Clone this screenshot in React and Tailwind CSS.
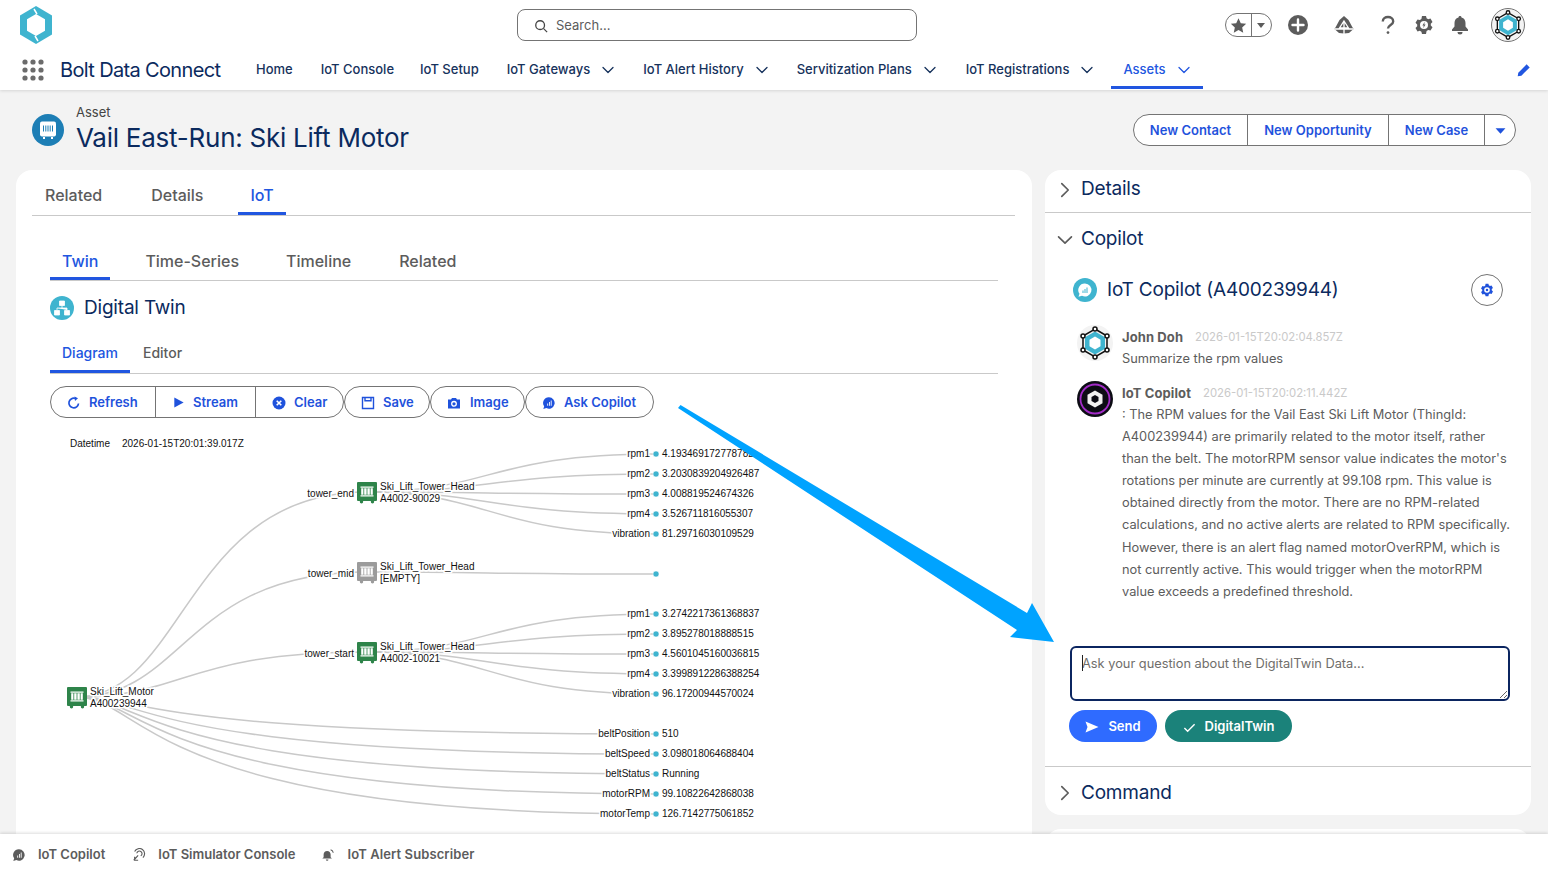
const Chevron = ({ className = "", dir = "down" }) => (
  <svg viewBox="0 0 14 14" className={className} fill="none" stroke="currentColor" strokeWidth="1.3" strokeLinecap="round" strokeLinejoin="round">
    {dir === "down" ? <path d="M2 4.500 7 9.500 12 4.500" /> : <path d="M4.500 2 9.500 7 4.500 12" />}
  </svg>
);

const Gear = ({ className = "", bolt = false, hole = "#fff" }) => (
  <svg viewBox="0 0 20 20" className={className} fill="currentColor">
    <path d="M8 1h4l.6 2.300 1.600.9 2.300-.6 2 3.400-1.700 1.700v1.800l1.700 1.700-2 3.400-2.300-.6-1.600.9L12 19H8l-.6-2.300-1.600-.9-2.300.6-2-3.400 1.700-1.700V9.500L1.500 7.800l2-3.400 2.300.6 1.600-.9z" />
    <circle cx="10" cy="10" r="4" fill={hole} />
    {bolt ? <path d="M10.800 6.800 8.400 10.400h1.400l-.6 2.800 2.400-3.600h-1.400z" fill="currentColor" /> : <circle cx="10" cy="10" r="1.800" fill="currentColor" />}
  </svg>
);

const Molecule = ({ className = "" }) => (
  <svg viewBox="0 0 36 36" className={className}>
    <path d="M18 4 30 11V25L18 32 6 25V11Z" stroke="#111" strokeWidth="1.500" fill="none" />
    <path d="M18 6.500 28 12.300V23.700L18 29.500 8 23.700V12.300Z" fill="#3fb4cf" />
    <path d="M18 11.500 23.500 14.800V21.200L18 24.500 12.500 21.200V14.800Z" fill="#fff" />
    <g fill="#fff" stroke="#111" strokeWidth="1.500">
      <circle cx="18" cy="4" r="2" />
      <circle cx="30" cy="11" r="2" />
      <circle cx="30" cy="25" r="2" />
      <circle cx="18" cy="32" r="2" />
      <circle cx="6" cy="25" r="2" />
      <circle cx="6" cy="11" r="2" />
    </g>
  </svg>
);

const AssetGlyph = () => (
  <g>
    <path d="M-6.500-5.500H6.500V-4.300H-6.500ZM-6.500 3.300H6.500V4.500H-6.500Z" fill="#fff" />
    <path d="M-5.800-3.800h2.200V2.800h-2.200ZM-2.800-3.800h2.400V2.800h-2.400ZM.4-3.800h2.400V2.800H.4ZM3.600-3.800h2.200V2.800H3.600Z" fill="#fff" />
  </g>
);

const ChatBars = ({ className = "" }) => (
  <svg viewBox="0 0 16 16" className={className} fill="currentColor">
    <path d="M8 1.500a6.500 6.500 0 1 1-3 12.300L1.500 14.800l1-3A6.500 6.500 0 0 1 8 1.500z" />
    <path d="M6 8.500h1V11H6zM8 6.800h1V11H8zM10 5h1v6h-1z" fill="#fff" />
  </svg>
);

const NavItem = ({ children, caret, active, className = "" }) => (
  <div className={`flex h-full items-center border-b-[3px] pt-1 text-[13px] font-medium ${active ? "border-[#2156e0] px-3 text-[#2156e0]" : "border-transparent text-[#16325c]"} ${className}`}>
    <span>{children}</span>
    {caret && <Chevron className="ml-[11px] h-[14px] w-[14px]" />}
  </div>
);

const OutlineBtn = ({ icon, children, className = "" }) => (
  <button className={`flex h-full items-center pt-px text-[13px] font-semibold text-[#1f52dc] ${className}`}>
    {icon}
    {children}
  </button>
);

const Tab = ({ children, active, size = "text-base", className = "" }) => (
  <div className={`-mb-px flex h-full items-center border-b-[3px] px-3 font-medium ${size} ${active ? "border-[#2156e0] text-[#2156e0]" : "border-transparent text-[#5c5c5c]"} ${className}`}>
    {children}
  </div>
);

const leaves = [
  [454, "rpm1", "4.193469172778782", 367, 492],
  [474, "rpm2", "3.2030839204926487", 367, 492],
  [494, "rpm3", "4.008819524674326", 367, 492],
  [514, "rpm4", "3.526711816055307", 367, 492],
  [534, "vibration", "81.29716030109529", 367, 492],
  [574, "", "", 367, 572],
  [614, "rpm1", "3.2742217361368837", 367, 652],
  [634, "rpm2", "3.895278018888515", 367, 652],
  [654, "rpm3", "4.5601045160036815", 367, 652],
  [674, "rpm4", "3.3998912286388254", 367, 652],
  [694, "vibration", "96.17200944570024", 367, 652],
  [734, "beltPosition", "510", 76, 697],
  [754, "beltSpeed", "3.098018064688404", 76, 697],
  [774, "beltStatus", "Running", 76, 697],
  [794, "motorRPM", "99.10822642868038", 76, 697],
  [814, "motorTemp", "126.7142775061852", 76, 697],
];

const towers = [
  [492, "tower_end", "A4002-90029", "#2e844a"],
  [572, "tower_mid", "[EMPTY]", "#9b9b9b"],
  [652, "tower_start", "A4002-10021", "#2e844a"],
];

const link = (x1, y1, c, x2, y2) => `M${x1} ${y1}C${c} ${y1} ${c} ${y2} ${x2} ${y2}`;

const T = ({ x, y, anchor = "start", children }) => (
  <text x={x} y={y + 3} textAnchor={anchor} fontSize="10" fill="#111" stroke="#fff" strokeWidth="3" paintOrder="stroke" fontFamily="'Liberation Sans',sans-serif">
    {children}
  </text>
);

const NodeIcon = ({ x, y, fill }) => (
  <g transform={`translate(${x} ${y})`}>
    <rect x="-10" y="-10" width="20" height="19" rx="1" fill={fill} />
    <circle cx="-5.500" cy="9.800" r="1.700" fill={fill} />
    <circle cx="5.500" cy="9.800" r="1.700" fill={fill} />
    <AssetGlyph />
  </g>
);

const Diagram = () => (
  <svg viewBox="50 430 948 404" className="mt-3 block h-[404px] w-[948px]">
    <T x={70} y={443.500}>Datetime</T>
    <T x={122} y={443.500}>2026-01-15T20:01:39.017Z</T>
    <g fill="none" stroke="#c9c9c9" strokeWidth="1.500">
      {towers.map(([y]) => <path key={y} d={link(76, 697, 185, 367, y)} />)}
      {leaves.map(([y, , , sx, sy]) => <path key={y} d={sx === 76 ? link(sx, sy, 145, 656, y) : link(sx, sy, 490, 656, y)} />)}
    </g>
    {leaves.map(([y, name, val]) => (
      <g key={y}>
        <circle cx="656" cy={y} r="3" fill="#3fb4cf" stroke="#fff" strokeWidth=".5" />
        {name && <T x={650} y={y} anchor="end">{name}</T>}
        {val && <T x={662} y={y}>{val}</T>}
      </g>
    ))}
    {towers.map(([y, name, sub, fill]) => (
      <g key={y}>
        <NodeIcon x={367} y={y} fill={fill} />
        <T x={354} y={y + 1.500} anchor="end">{name}</T>
        <T x={380} y={y - 5.500}>Ski_Lift_Tower_Head</T>
        <T x={380} y={y + 6.500}>{sub}</T>
      </g>
    ))}
    <NodeIcon x={77} y={697} fill="#2e844a" />
    <T x={90} y={691.500}>Ski_Lift_Motor</T>
    <T x={90} y={703.500}>A400239944</T>
  </svg>
);

const paragraph = [
  ": The RPM values for the Vail East Ski Lift Motor (ThingId:",
  "A400239944) are primarily related to the motor itself, rather",
  "than the belt. The motorRPM sensor value indicates the motor's",
  "rotations per minute are currently at 99.108 rpm. This value is",
  "obtained directly from the motor. There are no RPM-related",
  "calculations, and no active alerts are related to RPM specifically.",
  "However, there is an alert flag named motorOverRPM, which is",
  "not currently active. This would trigger when the motorRPM",
  "value exceeds a predefined threshold.",
];

const heading = "text-[19px] tracking-[-0.2px] text-[#0b2a5e]";

export default function App() {
  return (
    <div className="relative h-[874px] w-full overflow-hidden bg-[#f3f3f3] [font-family:Inter,sans-serif]">
      {/* Global header */}
      <header className="relative z-10 h-[90px] bg-white shadow-[0_1px_3px_rgba(0,0,0,0.12)]">
        <div className="flex h-[50px] items-center pl-5">
          <svg viewBox="0 0 32 38" className="h-[38px] w-8">
            <path d="M16 0 32 9.500V28.500L16 38 0 28.500V9.500Z" fill="#3fb4cf" />
            <path d="M16 8 25 13.200V24.800L16 30 7 24.800V13.200Z" fill="#fff" />
            <path d="M17 8 14 3M15 30 18 35" stroke="#fff" strokeWidth="1.500" />
          </svg>
          <div className="ml-[465px] flex h-8 w-[400px] items-center rounded-lg border border-[#747474] bg-white pl-4 pt-px text-[13px] text-[#5c5c5c]">
            <svg viewBox="0 0 16 16" className="mr-2 h-[14px] w-[14px]" fill="none" stroke="#444" strokeWidth="1.500">
              <circle cx="7" cy="7" r="5" />
              <path d="M11 11 15 15" />
            </svg>
            Search...
          </div>
          <div className="ml-auto mr-[23px] flex items-center text-[#5c5c5c]">
            <div className="flex h-6 w-[47px] items-center rounded-full border border-[#747474]">
              <div className="flex h-full w-[26px] items-center justify-center border-r border-[#747474]">
                <svg viewBox="0 0 20 20" className="h-[17px] w-[17px]" fill="currentColor"><path d="M10 1.500 12.700 7.300 19 8 14.300 12.300 15.600 18.500 10 15.400 4.400 18.500 5.700 12.300 1 8 7.300 7.300Z" /></svg>
              </div>
              <svg viewBox="0 0 10 10" className="ml-[4px] h-[10px] w-[10px]" fill="currentColor"><path d="M1 3h8L5 8z" /></svg>
            </div>
            <svg viewBox="0 0 20 20" className="ml-[16px] h-5 w-5"><circle cx="10" cy="10" r="10" fill="currentColor" /><path d="M10 4.500v11M4.500 10h11" stroke="#fff" strokeWidth="2.400" strokeLinecap="round" /></svg>
            <svg viewBox="0 0 20 20" className="ml-[26px] h-5 w-5" fill="currentColor">
              <path d="M10 1 14.500 5 18 11.500 19.500 14 15 18 10 18.500 5 18 .5 14 2 11.500 5.500 5Z" />
              <path d="M10 6 14.500 13H5.500Z M1 14H19M10 6V19" stroke="#fff" strokeWidth="1.300" fill="none" />
            </svg>
            <svg viewBox="0 0 20 24" className="ml-[26px] h-6 w-[16px]" fill="none" stroke="currentColor" strokeWidth="3">
              <path d="M3.500 7.500C3.500 4 6.500 2 10 2s6.500 2 6.500 5.500c0 4.500-6.500 4.500-6.500 9" />
              <circle cx="10" cy="21.500" r="1.700" fill="currentColor" stroke="none" />
            </svg>
            <Gear bolt className="ml-[18px] h-5 w-5" />
            <svg viewBox="0 0 20 20" className="ml-[16px] h-5 w-5" fill="currentColor">
              <path d="M10 1c.9 0 1.500.6 1.500 1.400C14.300 3 15.500 5.300 15.500 8v3.500l2.500 3V16H2v-1.500l2.500-3V8c0-2.700 1.200-5 4-5.600C8.500 1.600 9.100 1 10 1z" />
              <path d="M7.500 17h5a2.500 2.500 0 0 1-5 0z" />
            </svg>
            <div className="ml-[21px] flex h-[34px] w-[34px] items-center justify-center rounded-full border border-[#747474] bg-[#f3f3f3]">
              <Molecule className="h-8 w-8" />
            </div>
          </div>
        </div>
        <div className="flex h-10 items-stretch pl-[22px]">
          <svg viewBox="0 0 22 22" className="h-[22px] w-[22px] self-center" fill="#6b6b6b">
            {[3, 11, 19].map((cy) => [3, 11, 19].map((cx) => <circle key={`${cx}${cy}`} cx={cx} cy={cy} r="2.600" />))}
          </svg>
          <div className="ml-4 flex w-[196px] items-center text-xl tracking-[-0.65px] text-[#0b2a5e]">Bolt Data Connect</div>
          <nav className="flex h-[39px] items-stretch gap-7">
            <NavItem>Home</NavItem>
            <NavItem>IoT Console</NavItem>
            <NavItem className="-ml-[2px]">IoT Setup</NavItem>
            <NavItem caret>IoT Gateways</NavItem>
            <NavItem caret>IoT Alert History</NavItem>
            <NavItem caret>Servitization Plans</NavItem>
            <NavItem caret className="ml-px">IoT Registrations</NavItem>
            <NavItem caret active className="-ml-[11px]">Assets</NavItem>
          </nav>
          <svg viewBox="0 0 16 16" className="ml-auto mr-[17px] h-[14px] w-[14px] self-center" fill="#2156e0">
            <path d="M11 1.500 14.500 5 5 14.500 .8 15.200 1.500 11z" />
          </svg>
        </div>
      </header>

      {/* Page header */}
      <div className="flex h-[80px] items-start pl-8 pr-8">
        <svg viewBox="-16 -16 32 32" className="mt-6 h-8 w-8">
          <circle r="16" fill="#1d7eb5" />
          <rect x="-8" y="-8.500" width="16" height="15" rx="2" fill="#fff" />
          <path d="M-5 8h2M3 8h2" stroke="#fff" strokeWidth="2" />
          <path d="M-4.500-4.500v6M-2.200-4.500v6M0-4.500v6M2.200-4.500v6M4.500-4.500v6" stroke="#1d7eb5" strokeWidth="1" />
        </svg>
        <div className="ml-3 mt-[14px]">
          <div className="text-[13px] leading-[16px] text-[#444]">Asset</div>
          <div className="mt-[2px] text-[26px] leading-[32px] tracking-[-0.25px] text-[#0b2a5e]">Vail East-Run: Ski Lift Motor</div>
        </div>
        <div className="ml-auto mt-6 flex h-8 w-[383px] items-stretch overflow-hidden rounded-full border border-[#747474] bg-white">
          <OutlineBtn className="w-[113px] justify-center">New Contact</OutlineBtn>
          <OutlineBtn className="w-[141px] justify-center border-l border-[#747474]">New Opportunity</OutlineBtn>
          <OutlineBtn className="w-[96px] justify-center border-l border-[#747474]">New Case</OutlineBtn>
          <div className="flex flex-1 items-center justify-center border-l border-[#747474]">
            <svg viewBox="0 0 10 10" className="h-[11px] w-[11px]" fill="#1f52dc"><path d="M.5 3h9L5 8z" /></svg>
          </div>
        </div>
      </div>

      {/* Main columns */}
      <main className="flex gap-[13px] pl-4">
        <section className="h-[704px] w-[1016px] rounded-t-2xl bg-white pl-4 pr-[17px]">
          <div className="flex h-[46px] items-stretch gap-6 border-b border-[#c9c9c9] pl-px">
            <Tab className="mr-px pt-2">Related</Tab>
            <Tab className="-mr-px pt-2">Details</Tab>
            <Tab active className="pt-2">IoT</Tab>
          </div>
          <div className="ml-[18px] w-[948px]">
            <div className="mt-[25px] flex h-10 items-stretch gap-[23px] border-b border-[#c9c9c9]">
              <Tab active className="pt-1">Twin</Tab>
              <Tab className="pt-1">Time-Series</Tab>
              <Tab className="pt-1">Timeline</Tab>
              <Tab className="ml-px pt-1">Related</Tab>
            </div>
            <div className="mt-[15px] flex h-6 items-center">
              <svg viewBox="0 0 24 24" className="h-6 w-6">
                <circle cx="12" cy="12" r="12" fill="#3fb4cf" />
                <path d="M9.500 5h5v4.500h-5zM12 9.500V12M7 12h10v2M7 12v2M4.500 14.500h5V19h-5zM14.500 14.500h5V19h-5z" fill="#fff" stroke="#fff" strokeWidth=".8" />
              </svg>
              <span className={`ml-[10px] ${heading}`}>Digital Twin</span>
            </div>
            <div className="mt-[14px] flex h-10 items-stretch border-b border-[#c9c9c9]">
              <Tab active size="text-sm" className="mr-px pt-[2px]">Diagram</Tab>
              <Tab size="text-sm" className="pt-[2px]">Editor</Tab>
            </div>
            <div className="mt-3 flex h-8">
              <div className="flex w-[294px] items-stretch rounded-full border border-[#747474]">
                <OutlineBtn className="w-[104px] gap-2 pl-4" icon={
                  <svg viewBox="0 0 14 14" className="h-[14px] w-[14px]" fill="none" stroke="#1f52dc" strokeWidth="1.700"><path d="M11.500 7.500A4.800 4.800 0 1 1 8 2.400" /><path d="M7.500 .5 11 2.200 8 5z" fill="#1f52dc" stroke="none" /></svg>
                }>Refresh</OutlineBtn>
                <OutlineBtn className="w-[100px] gap-2 border-l border-[#747474] pl-4" icon={
                  <svg viewBox="0 0 14 14" className="h-[13px] w-[13px]" fill="#1f52dc"><path d="M2.500 1.500 12.500 7 2.500 12.500z" /></svg>
                }>Stream</OutlineBtn>
                <OutlineBtn className="flex-1 gap-2 border-l border-[#747474] pl-4" icon={
                  <svg viewBox="0 0 14 14" className="h-[14px] w-[14px]"><circle cx="7" cy="7" r="6.500" fill="#1f52dc" /><path d="M4.700 4.700 9.300 9.300M9.300 4.700 4.700 9.300" stroke="#fff" strokeWidth="1.600" /></svg>
                }>Clear</OutlineBtn>
              </div>
              <div className="flex w-[86px] items-stretch rounded-full border border-[#747474]">
                <OutlineBtn className="w-full gap-2 pl-4" icon={
                  <svg viewBox="0 0 14 14" className="h-[14px] w-[14px]" fill="none" stroke="#1f52dc" strokeWidth="1.400"><path d="M1.500 1.500h11v11h-11zM4 1.500v3.200h6V1.500" /></svg>
                }>Save</OutlineBtn>
              </div>
              <div className="flex w-[95px] items-stretch rounded-full border border-[#747474]">
                <OutlineBtn className="w-full gap-[9px] pl-4" icon={
                  <svg viewBox="0 0 14 14" className="h-[14px] w-[14px]"><path d="M1 3.500h3L5 2h4l1 1.500h3V12.500H1z" fill="#1f52dc" /><circle cx="7" cy="7.800" r="2.300" fill="none" stroke="#fff" strokeWidth="1.300" /></svg>
                }>Image</OutlineBtn>
              </div>
              <div className="flex w-[129px] items-stretch rounded-full border border-[#747474]">
                <OutlineBtn className="w-full gap-2 pl-4" icon={<ChatBars className="h-[14px] w-[14px]" />}>Ask Copilot</OutlineBtn>
              </div>
            </div>
            <Diagram />
          </div>
        </section>

        <aside className="w-[486px]">
          <div className="h-[645px] rounded-2xl bg-white">
            <div className={`flex h-[43px] items-center border-b border-[#c9c9c9] pb-[3px] pl-[11px] ${heading}`}>
              <Chevron dir="right" className="mr-[7px] h-[18px] w-[18px] text-[#5c5c5c]" />
              Details
            </div>
            <div className={`flex h-[51px] items-center pl-[11px] pt-[2px] ${heading}`}>
              <Chevron className="mr-[7px] h-[18px] w-[18px] text-[#5c5c5c]" />
              Copilot
            </div>
            <div className="mt-[10px] flex h-8 items-center pl-7 pr-7">
              <svg viewBox="0 0 24 24" className="h-6 w-6">
                <circle cx="12" cy="12" r="12" fill="#3fb4cf" />
                <path d="M12 5.500a6.500 6.500 0 1 1-3 12.300l-3.500 1 1-3A6.500 6.500 0 0 1 12 5.500z" fill="#fff" />
                <path d="M9.500 12.500h1V15h-1zM11.500 11h1v4h-1zM13.500 9.500h1V15h-1z" fill="#3fb4cf" />
              </svg>
              <span className={`ml-[10px] ${heading}`}>IoT Copilot (A400239944)</span>
              <div className="ml-auto flex h-8 w-8 items-center justify-center rounded-full border border-[#747474]">
                <Gear className="h-[14px] w-[14px] text-[#1f52dc]" />
              </div>
            </div>
            <div className="ml-8 mt-[19px] flex">
              <div className="flex h-9 w-9 items-center justify-center rounded-full bg-[#f3f3f3]">
                <Molecule className="h-9 w-9" />
              </div>
              <div className="ml-[9px]">
                <div className="flex h-[23px] items-center pt-[2px]">
                  <span className="text-[13px] font-bold tracking-[0.1px] text-[#5c5c5c]">John Doh</span>
                  <span className="ml-3 text-[11.3px] text-[#c9c9c9]">2026-01-15T20:02:04.857Z</span>
                </div>
                <div className="text-[12.8px] leading-[22px] text-[#5c5c5c]">Summarize the rpm values</div>
              </div>
            </div>
            <div className="ml-8 mt-[11px] flex">
              <svg viewBox="0 0 36 36" className="h-9 w-9 shrink-0">
                <circle cx="18" cy="18" r="18" fill="#0c0c14" />
                <circle cx="18" cy="18" r="14.500" fill="none" stroke="#a22bc7" strokeWidth="1.800" />
                <path d="M18 9.500 25.500 13.800V22.200L18 26.500 10.500 22.200V13.800Z" fill="#f2f2f2" />
                <path d="M18 14 21.500 16V20L18 22 14.500 20V16Z" fill="#0c0c14" />
              </svg>
              <div className="ml-[9px] w-[400px]">
                <div className="flex h-[23px] items-center pt-[2px]">
                  <span className="text-[13px] font-bold tracking-[0.1px] text-[#5c5c5c]">IoT Copilot</span>
                  <span className="ml-3 text-[11.3px] text-[#c9c9c9]">2026-01-15T20:02:11.442Z</span>
                </div>
                {paragraph.map((line) => (
                  <div key={line} className="whitespace-nowrap text-[12.8px] leading-[22.1px] text-[#5c5c5c]">{line}</div>
                ))}
              </div>
            </div>
            <div className="relative ml-[25px] mt-[43px] h-[55px] w-[440px]">
              <textarea
                readOnly
                placeholder="Ask your question about the DigitalTwin Data..."
                className="block h-[55px] w-[440px] rounded-md border-2 border-[#0b2560] px-[10px] py-[7px] text-[12.8px] leading-[18px] outline-none placeholder:text-[#706e6b]"
              />
              <span className="absolute left-3 top-[9px] h-[16px] w-px bg-[#222]" />
            </div>
            <div className="ml-6 mt-[9px] flex gap-2">
              <button className="flex h-8 w-[88px] items-center justify-center gap-[9px] rounded-full bg-[#2f6bff] pt-px text-[13px] font-semibold text-white">
                <svg viewBox="0 0 14 14" className="mt-[2px] h-[14px] w-[14px]" fill="#fff"><path d="M.5 1.500 13.500 7 .5 12.500 2.500 7z" /></svg>
                Send
              </button>
              <button className="flex h-8 w-[127px] items-center justify-center gap-[9px] rounded-full bg-[#1b827a] pt-px text-[13px] font-semibold text-white">
                <svg viewBox="0 0 14 14" className="mt-[2px] h-[13px] w-[13px]" fill="none" stroke="#fff" strokeWidth="1.500"><path d="M1.500 7.500 5 11 12.500 3.500" /></svg>
                DigitalTwin
              </button>
            </div>
            <div className={`mt-6 flex h-[49px] items-center border-t border-[#c9c9c9] pl-[11px] pt-1 ${heading}`}>
              <Chevron dir="right" className="mr-[7px] h-[18px] w-[18px] text-[#5c5c5c]" />
              Command
            </div>
          </div>
          <div className="mt-[14px] h-10 rounded-t-2xl bg-white" />
        </aside>
      </main>

      {/* Annotation arrow */}
      <svg viewBox="0 0 1548 874" className="pointer-events-none absolute inset-0 z-20 h-[874px] w-[1548px]">
        <path d="M680.500 405 1027 613 1032 603 1054 642 1010 637 1017 630 678 408Z" fill="#00a3ff" />
      </svg>

      {/* Utility bar */}
      <footer className="absolute inset-x-0 bottom-0 z-10 flex h-10 items-center bg-white pl-3 pt-px text-[13px] font-semibold text-[#5c5c5c] shadow-[0_-1px_3px_rgba(0,0,0,0.14)]">
        <ChatBars className="h-[14px] w-[14px]" />
        <span className="ml-3">IoT Copilot</span>
        <svg viewBox="0 0 16 16" className="ml-[27px] h-[14px] w-[14px]" fill="none" stroke="currentColor" strokeWidth="1.300">
          <path d="M3 4a6 6 0 1 1 9.500 7M5.500 6a3 3 0 1 1 4.500 3" />
          <path d="M7 8.500 2 14M3 10v4h4" />
        </svg>
        <span className="ml-3">IoT Simulator Console</span>
        <svg viewBox="0 0 16 16" className="ml-[26px] h-[14px] w-[14px]" fill="currentColor">
          <path d="M7 3.500c2.500 0 4 2 4 4v3l1.500 1.500H1.500L3 10.500v-3c0-2 1.500-4 4-4zM5.500 13h3a1.500 1.500 0 0 1-3 0z" />
          <path d="M11 2a4 4 0 0 1 3 3.500" fill="none" stroke="currentColor" strokeWidth="1.200" />
        </svg>
        <span className="ml-3 tracking-[0.1px]">IoT Alert Subscriber</span>
      </footer>
    </div>
  );
}
